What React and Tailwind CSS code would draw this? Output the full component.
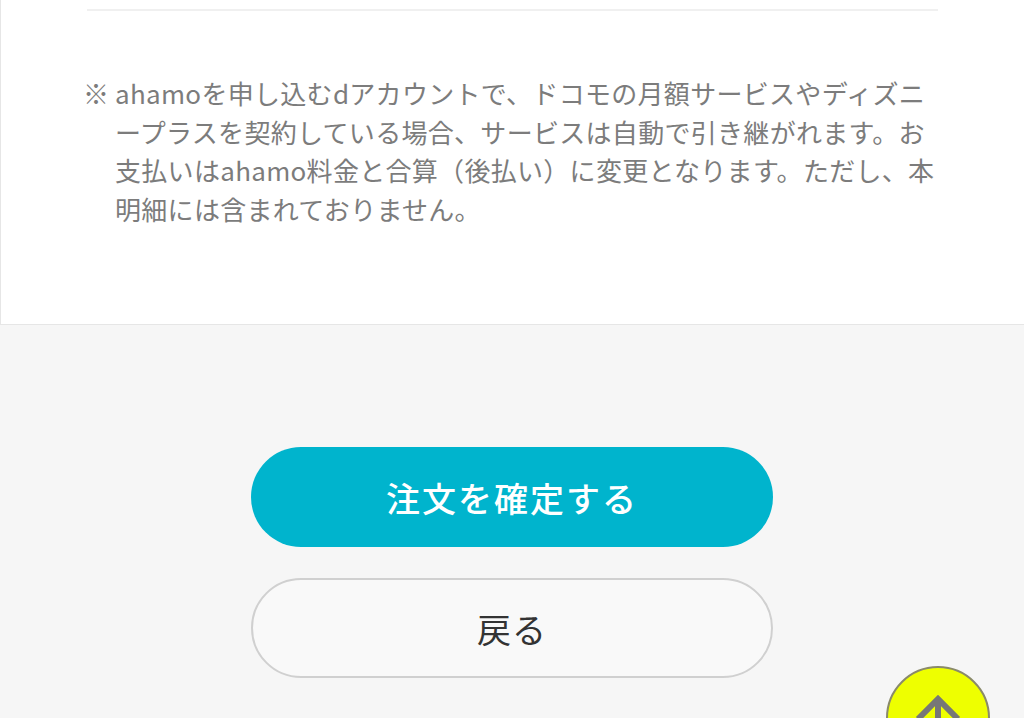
import React from 'react';

const font = { fontFamily: '"Noto Sans CJK JP", "Noto Sans", sans-serif' };

const App = () => {
  return (
    <div className="relative min-h-[718px] w-[1024px] overflow-hidden bg-[#f6f6f6]" style={font}>
      {/* note panel */}
      <div className="h-[325px] bg-white border-l border-b border-[#e6e6e6]">
        <div className="mx-[86px] h-[11px] border-b-2 border-[#f0f0f0]" />
        <div className="flex pl-[82px] pt-[63px] text-[26px] leading-[38.5px] tracking-[0.3px] text-[#7c7c7c]">
          <span className="w-[32px] shrink-0">※</span>
          <p className="w-[826px]">
            ahamoを申し込むdアカウントで、ドコモの月額サービスやディズニープラスを契約している場合、サービスは自動で引き継がれます。お支払いはahamo料金と合算（後払い）に変更となります。ただし、本明細には含まれておりません。
          </p>
        </div>
      </div>

      {/* actions */}
      <div className="flex flex-col items-center pt-[122px] gap-[31px]">
        <button className="w-[522px] h-[100px] rounded-full bg-[#00b4cd] text-white text-[34px] font-medium tracking-[2px]">
          注文を確定する
        </button>
        <button className="w-[522px] h-[100px] rounded-full bg-[#f9f9f9] border-2 border-[#d0d0d0] text-[#333] text-[34px] tracking-[1px]">
          戻る
        </button>
      </div>

      {/* page top button */}
      <div className="absolute left-[886px] top-[666px] w-[104px] h-[104px] rounded-full bg-[#eeff00] border-2 border-[#8a8a6a] flex justify-center">
        <svg width="60" height="60" viewBox="0 0 60 60" className="mt-[18px]">
          <path d="M10 33 L30 13 L50 33" fill="none" stroke="#777" strokeWidth="6" strokeLinejoin="miter" />
          <path d="M30 15 L30 60" fill="none" stroke="#777" strokeWidth="6" />
        </svg>
      </div>
    </div>
  );
};

export default App;
